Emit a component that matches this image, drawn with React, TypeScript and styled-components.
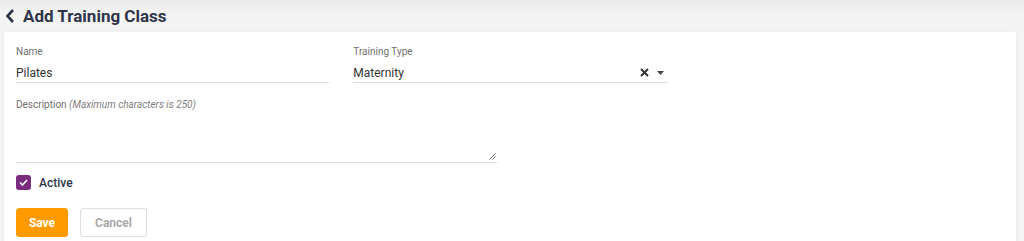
import { createGlobalStyle, styled } from "styled-components";

const GlobalStyle = createGlobalStyle`
	html, body {
		margin: 0;
		padding: 0;
		background: #f4f4f4;
		font-family: Roboto, "Liberation Sans", sans-serif;
	}
`;

const Page = styled.div`
	width: 1024px;
	height: 241px;
	overflow: hidden;
	background: linear-gradient(#e9e9e9 0px, #f4f4f4 14px, #f4f4f4 100%);
	padding: 0 8px 0 4px;
	box-sizing: border-box;
`;

const Header = styled.div`
	display: flex;
	align-items: center;
	height: 32px;
	gap: 7px;
	padding-left: 1px;
	padding-bottom: 1px;
	box-sizing: border-box;
`;

const Title = styled.h1`
	margin: 0;
	font-size: 17px;
	font-weight: 700;
	color: #2e3548;
`;

const Card = styled.div`
	background: #fff;
	box-shadow: 0 1px 3px rgba(0, 0, 0, 0.08);
	padding: 14px 12px 12px;
	display: flex;
	flex-direction: column;
	min-height: 220px;
	box-sizing: border-box;
`;

const Grid = styled.div`
	display: grid;
	grid-template-columns: repeat(3, 1fr);
	column-gap: 24px;
`;

const Field = styled.div<{ $wide?: boolean }>`
	display: flex;
	flex-direction: column;
	width: ${(p) => (p.$wide ? "481px" : "auto")};
`;

const Label = styled.label`
	font-size: 10px;
	color: #707070;
	line-height: 12px;
	em {
		color: #808080;
	}
`;

const InputRow = styled.div`
	display: flex;
	align-items: center;
	height: 20px;
	margin-top: 4px;
	border-bottom: 1px solid #dcdcdc;
	font-size: 12px;
	color: #333;
`;

const Value = styled.span`
	flex: 1;
	padding-top: 2px;
`;

const Icons = styled.span`
	display: flex;
	align-items: center;
	gap: 8px;
	margin-right: 3px;
	padding-top: 1px;
`;

const TextArea = styled.div`
	position: relative;
	height: 46px;
	margin-top: 5px;
	border-bottom: 1px solid #dcdcdc;
`;

const Grip = styled.svg`
	position: absolute;
	right: 1px;
	bottom: 2px;
`;

const Description = styled(Field)`
	margin-top: 16px;
`;

const CheckRow = styled.label`
	display: flex;
	align-items: center;
	gap: 8px;
	margin-top: 12px;
	font-size: 12px;
	font-weight: 500;
	color: #2e3548;
`;

const Box = styled.span`
	width: 15px;
	height: 15px;
	border-radius: 3px;
	background: #7c2c7f;
	display: flex;
	align-items: center;
	justify-content: center;
`;

const Buttons = styled.div`
	display: flex;
	gap: 12px;
	margin-top: 18px;
`;

const Button = styled.button<{ $primary?: boolean }>`
	height: 29px;
	border-radius: 3px;
	font-family: inherit;
	font-size: 12px;
	font-weight: 700;
	border: 1px solid ${(p) => (p.$primary ? "#ff9a00" : "#dedede")};
	background: ${(p) => (p.$primary ? "#ff9a00" : "#fff")};
	color: ${(p) => (p.$primary ? "#fff" : "#aaaaaa")};
	width: ${(p) => (p.$primary ? "52px" : "67px")};
`;

export default function App() {
	return (
		<Page>
			<GlobalStyle />
			<Header>
				<svg width="11" height="14" viewBox="0 0 11 14">
					<path d="M8 1 L2.5 7 L8 13" fill="none" stroke="#2e3548" strokeWidth="2.6" />
				</svg>
				<Title>Add Training Class</Title>
			</Header>
			<Card>
				<Grid>
					<Field>
						<Label>Name</Label>
						<InputRow>
							<Value>Pilates</Value>
						</InputRow>
					</Field>
					<Field>
						<Label>Training Type</Label>
						<InputRow>
							<Value>Maternity</Value>
							<Icons>
								<svg width="9" height="9" viewBox="0 0 9 9">
									<path d="M1 1 L8 8 M8 1 L1 8" stroke="#333" strokeWidth="2" />
								</svg>
								<svg width="7" height="4" viewBox="0 0 7 4">
									<path d="M0 0 L7 0 L3.5 4 Z" fill="#444" />
								</svg>
							</Icons>
						</InputRow>
					</Field>
				</Grid>
				<Description $wide>
					<Label>
						Description <em>(Maximum characters is 250)</em>
					</Label>
					<TextArea>
						<Grip width="7" height="7" viewBox="0 0 7 7">
							<path d="M6.5 0.5 L0.5 6.5 M6.5 3.5 L3.5 6.5" stroke="#777" strokeWidth="1" />
						</Grip>
					</TextArea>
				</Description>
				<CheckRow>
					<Box>
						<svg width="9" height="7" viewBox="0 0 9 7">
							<path d="M1 3.5 L3.5 6 L8 1" fill="none" stroke="#fff" strokeWidth="1.6" />
						</svg>
					</Box>
					Active
				</CheckRow>
				<Buttons>
					<Button $primary>Save</Button>
					<Button>Cancel</Button>
				</Buttons>
			</Card>
		</Page>
	);
}
